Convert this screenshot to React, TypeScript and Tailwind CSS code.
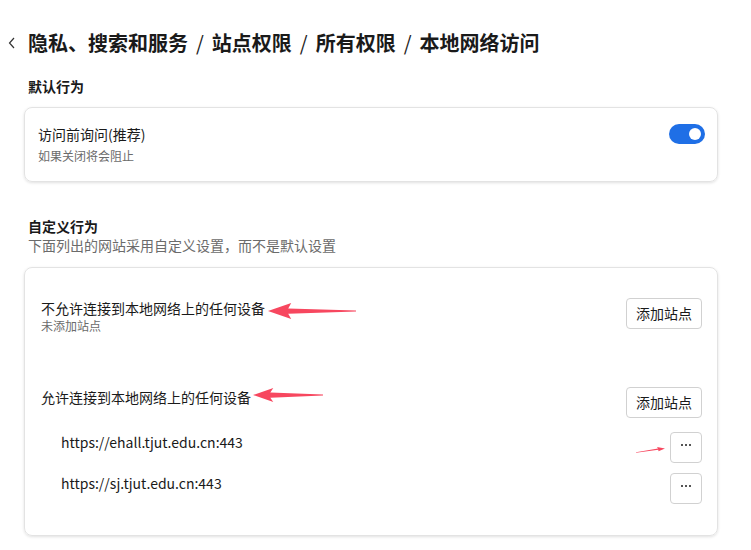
import React from "react";

function Arrow({ width, height }: { width: number; height: number }) {
  // red annotation arrow pointing left, tapered tail
  const mid = height / 2;
  const head = height * 1.45;
  return (
    <svg width={width} height={height} viewBox={`0 0 ${width} ${height}`}>
      <polygon
        points={`0,${mid} ${head},0 ${head - 3},${mid - 2.6} ${width},${mid - 0.6} ${width},${mid + 0.4} ${head - 3},${mid + 2.8} ${head},${height}`}
        fill="#f7475f"
      />
    </svg>
  );
}

function AddButton() {
  return (
    <button className="h-[31px] w-[76px] shrink-0 rounded-[4px] border border-[#d1d1d1] bg-white text-[14px] text-[#1a1a1a]">
      添加站点
    </button>
  );
}

function MoreButton() {
  return (
    <button className="flex h-[31px] w-[32px] shrink-0 items-center justify-center gap-[2px] rounded-[4px] border border-[#d1d1d1] bg-white pb-[6px]">
      <span className="h-[2px] w-[2px] bg-[#555]" />
      <span className="h-[2px] w-[2px] bg-[#555]" />
      <span className="h-[2px] w-[2px] bg-[#555]" />
    </button>
  );
}

const crumbs = ["隐私、搜索和服务", "站点权限", "所有权限", "本地网络访问"];

export default function App() {
  return (
    <div
      className="h-[550px] w-[751px] overflow-hidden bg-white pt-[29px] text-[#1a1a1a]"
      style={{ fontFamily: '"Noto Sans CJK SC", "Noto Sans", sans-serif' }}
    >
      <div className="flex h-[28px] items-center">
        <svg width="8" height="12" viewBox="0 0 8 12" className="ml-[8px] mr-[12px]">
          <polyline points="6,1 1.5,6 6,11" fill="none" stroke="#333" strokeWidth="1.2" />
        </svg>
        <h1 className="flex text-[20px] font-bold leading-[28px]">
          {crumbs.map((c, i) => (
            <React.Fragment key={c}>
              {i > 0 && <span className="mx-[8px] font-normal text-[#222]">/</span>}
              <span>{c}</span>
            </React.Fragment>
          ))}
        </h1>
      </div>

      <div className="ml-6 w-[694px]">
        <h2 className="mt-[19px] pl-1 text-[14px] font-bold leading-[20px]">默认行为</h2>
        <div className="mt-[11px] flex items-start justify-between rounded-[8px] border border-[#e3e3e3] pb-[17px] pl-[13px] pr-[12px] pt-[16px] shadow-[0_1px_3px_rgba(0,0,0,0.12)]">
          <div>
            <div className="text-[14px] leading-[20px]">访问前询问(推荐)</div>
            <div className="mt-[4px] text-[12px] leading-[16px] text-[#6b6b6b]">如果关闭将会阻止</div>
          </div>
          <div className="flex h-[20px] w-[36px] items-center justify-end rounded-full bg-[#1f6fe6] pr-[4px]">
            <div className="h-[12px] w-[12px] rounded-full bg-white" />
          </div>
        </div>

        <h2 className="mt-[35px] pl-1 text-[14px] font-bold leading-[19px]">自定义行为</h2>
        <p className="pl-1 text-[14px] leading-[19px] text-[#6b6b6b]">下面列出的网站采用自定义设置，而不是默认设置</p>

        <div className="relative mt-[12px] rounded-[8px] border border-[#e3e3e3] pb-[31px] pl-[16px] pr-[15px] pt-[30px] shadow-[0_1px_3px_rgba(0,0,0,0.12)]">
          <div className="flex items-start justify-between">
            <div>
              <div className="flex h-[20px] items-center text-[14px] leading-[20px]">
                <span>不允许连接到本地网络上的任何设备</span>
                <span className="ml-[3px] flex translate-y-[3px] items-center">
                  <Arrow width={88} height={16} />
                </span>
              </div>
              <div className="text-[12px] leading-[16px] text-[#6b6b6b]">未添加站点</div>
            </div>
            <AddButton />
          </div>

          <div className="mt-[53px] flex items-start justify-between">
            <div className="flex h-[20px] items-center text-[14px] leading-[20px]">
              <span>允许连接到本地网络上的任何设备</span>
              <span className="ml-[2px] flex -translate-y-[2px] items-center">
                <Arrow width={70} height={14} />
              </span>
            </div>
            <AddButton />
          </div>

          <div className="mt-[14px] flex items-start justify-between pl-5">
            <span className="text-[14px] leading-[20px]">https://ehall.tjut.edu.cn:443</span>
            <MoreButton />
          </div>
          <div className="mt-[10px] flex items-start justify-between pl-5">
            <span className="text-[14px] leading-[20px]">https://sj.tjut.edu.cn:443</span>
            <MoreButton />
          </div>

          <svg
            width="30"
            height="8"
            viewBox="0 0 30 8"
            className="absolute left-[611px] top-[178px]"
          >
            <polygon points="0,6.2 22,2.6 21,1 29,2.5 22.5,5.3 22.3,3.8 0,6.8" fill="#f7475f" />
          </svg>
        </div>
      </div>
    </div>
  );
}
